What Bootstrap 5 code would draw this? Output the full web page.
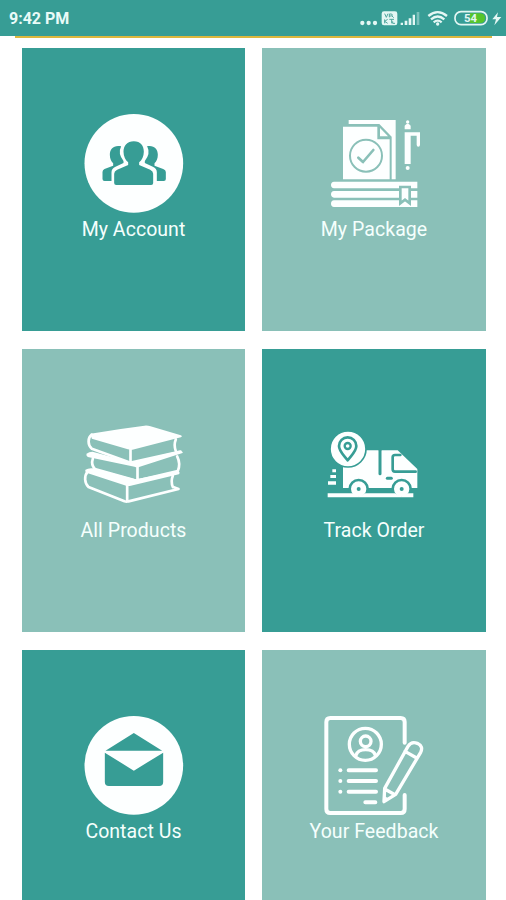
<!DOCTYPE html>
<html lang="en">
<head>
<meta charset="utf-8">
<meta name="viewport" content="width=device-width, initial-scale=1">
<title>Store menu</title>
<link href="https://cdn.jsdelivr.net/npm/bootstrap@5.3.0/dist/css/bootstrap.min.css" rel="stylesheet">
<style>
:root{--teal:#379d95;--mint:#8ac0b8;--gold:#dcb83e}
body{font-family:Roboto,"Liberation Sans",sans-serif;background:#fff;height:900px;overflow:hidden}
.statusbar{height:36px;background:var(--teal);color:#e9fbf8;padding-left:9px}
.clock{font-size:16px;font-weight:700;line-height:20px;padding-top:2px}
.goldline{height:2px;background:var(--gold);margin:0 14px 0 15px}
.tiles{display:grid;grid-template-columns:223px 224px;column-gap:17px;row-gap:18px;padding:10px 0 0 22px}
.tile{height:283px;padding-top:57px;color:#f5fffd}
.tile svg{width:130px;height:110px;flex:none;fill:#fdffff;stroke:none}
.teal{background:var(--teal);--bg:var(--teal)}
.mint{background:var(--mint);--bg:var(--mint)}
.tile .ln{fill:none;stroke:#fdffff;stroke-linecap:round;stroke-linejoin:round}
.tile .cut{fill:none;stroke:var(--bg);stroke-linecap:round;stroke-linejoin:round}
.tile .hole{fill:var(--bg)}
.caption{font-size:19.5px;line-height:29px;letter-spacing:.05px;white-space:nowrap}
</style>
</head>
<body>
<header class="statusbar d-flex align-items-center justify-content-between">
  <div class="clock">9:42 PM</div>
  <svg width="166" height="36" viewBox="0 0 498 108" fill="#e4f7f4" aria-hidden="true">
    <circle cx="67" cy="69" r="6.500"/><circle cx="86" cy="69" r="6.500"/><circle cx="105" cy="69" r="6.500"/>
    <rect x="125" y="34" width="47" height="42" rx="7"/>
    <path d="M134 41l5 11 5-11M148 52V42h7q4 3 0 6h-7m8 0 5 5M134 58v12m0-6 9-6m-9 6 9 6M148 58h14m-7 0v12M158 64v6h7" fill="none" stroke="#4ea59d" stroke-width="3"/>
    <path d="M182 75v-7h7v7zM194 75V62h8v13zM206 75V55h8v20zM218 75V44h7v31z"/><path d="M230 75V36h8v39z" opacity=".4"/>
    <g fill="none" stroke="#e4f7f4" stroke-width="7"><path d="M265 48q28-23 56 0M273 58q20-17 40 0M281 67q12-10 24 0"/></g><circle cx="293" cy="72" r="5"/>
    <rect x="345" y="35" width="96" height="39" rx="18" fill="none" stroke="#e4f7f4" stroke-width="5"/>
    <path d="M390 40h30q15 1 15 14.500T420 69h-30z" fill="#55c52b"/>
    <text x="372" y="66" font-family="Roboto,sans-serif" font-size="34" font-weight="700">54</text>
    <path d="M474 37l-17 21h11l-5 18 21-25h-13z"/>
  </svg>
</header>
<div class="goldline"></div>
<main class="tiles">
  <a class="tile teal d-flex flex-column align-items-center text-decoration-none" href="#">
    <svg viewBox="-4.500 15 390 330" aria-hidden="true">
      <circle cx="190" cy="190" r="148"/>
      <g class="hole">
        <path d="M152 139c-22-5-34 8-34 25 0 12 4 20 10 26v7l-26 10q-6 3-6 9v21q0 6 6 6h21v-26q0-12 12-17l24-11v-6q-18-22-7-44z"/>
        <path d="M228 139c22-5 34 8 34 25 0 12-4 20-10 26v7l26 10q8 3 8 9v21q0 6-6 6h-21v-26q0-12-12-17l-24-11v-6q18-22 7-44z"/>
        <path d="M190 124c-20 0-31 13-31 31 0 14 6 25 14 32v8l-33 14q-9 4-9 12v28q0 6 6 6h105q6 0 6-6v-28q0-8-9-12l-33-14v-8c8-7 14-18 14-32 0-18-10-31-30-31z"/>
      </g>
    </svg>
    <span class="caption">My Account</span>
  </a>
  <a class="tile mint d-flex flex-column align-items-center text-decoration-none" href="#">
    <svg viewBox="-3 15 390 330" aria-hidden="true">
      <path d="M116 60h141v178h-12V110l-37-38h-92z"/>
      <path d="M99 80h103v38h37v120H99z"/>
      <path d="M210 84v25h24z"/>
      <circle class="cut" cx="168" cy="167" r="48" stroke-width="6"/>
      <path class="cut" d="M145 173l14 13 31-36" stroke-width="8"/>
      <path d="M72 245h250v20H72q-9-1-9-10t9-10zM72 273h250v20H72q-9-1-9-10t9-10zM72 301h250v20H72q-9-1-9-10t9-10z"/>
      <path d="M271 261h28v49l-14-11-14 11z" stroke="var(--bg)" stroke-width="8"/>
      <circle cx="293" cy="66" r="5"/><path d="M284 77q9-12 18 0v11h-18zM284 97h46v37q0 6-5 6t-5-6v-27h-18v85h-18z"/><circle cx="293" cy="204" r="6"/>
    </svg>
    <span class="caption">My Package</span>
  </a>
  <a class="tile mint d-flex flex-column align-items-center text-decoration-none" href="#">
    <svg viewBox="-4.500 -12 390 330" aria-hidden="true">
      <path d="M60 71q82-14 162-24 9-1 18 2l91 27q6 3 0 6L186 119q-7 1-14-1L64 86z"/>
      <path class="ln" d="M64 74c-13 9-13 31 0 42l110 40q7 2 14 0l142-31M180 116v39M316 88q-7 18 0 36" stroke-width="8"/>
      <path d="M48 131q8-6 18-6l112 30q7 2 14 0l134-33q14 2 10 7l-128 41q-8 3-16 0L52 141q-6-4-4-10z"/>
      <path class="ln" d="M67 146q-6 18 6 31l118 33q8 2 16 0l115-27q9-22-2-44M201 167v42" stroke-width="8"/>
      <path d="M45 179q9-6 23-4l120 31q8 2 16 0l115-22q13 2 6 9l-144 34q-7 2-14 0L50 189q-8-4-5-10z"/>
      <path class="ln" d="M52 184c-12 14-10 36 2 47l108 43q6 2 12 0l150-37-16-6M170 223v50M307 197q-7 17 0 34" stroke-width="8"/>
    </svg>
    <span class="caption">All Products</span>
  </a>
  <a class="tile teal d-flex flex-column align-items-center text-decoration-none" href="#">
    <svg viewBox="-3 -12 390 330" aria-hidden="true">
      <path d="M99 121h164l59 56v57H99z"/>
      <circle cx="114" cy="117" r="54" stroke="var(--bg)" stroke-width="5"/>
      <path class="cut" d="M113 151c-11-15-26-27-26-43a26 26 0 0 1 52 0c0 16-15 28-26 43z" stroke-width="8"/>
      <circle class="cut" cx="113" cy="108" r="9" stroke-width="7"/>
      <path class="cut" d="M210 121v70" stroke-width="9"/>
      <path class="cut" d="M317 185h-62q-7 0-7-7v-36q0-7 7-7h16" stroke-width="8"/>
      <path class="cut" d="M232 205h12" stroke-width="9"/>
      <circle cx="146" cy="237" r="27" stroke="var(--bg)" stroke-width="8"/><circle cx="275" cy="237" r="27" stroke="var(--bg)" stroke-width="8"/>
      <circle class="hole" cx="146" cy="237" r="6"/><circle class="hole" cx="275" cy="237" r="6"/>
      <path d="M53 250h75q18 17 38 0h89q20 17 38 0h17v12H53z"/>
      <path d="M67 178h11v9H67zM61 195h17v9H61zM54 214h24v10H54z"/>
    </svg>
    <span class="caption">Track Order</span>
  </a>
  <a class="tile teal d-flex flex-column align-items-center text-decoration-none" href="#">
    <svg viewBox="-4.500 21 390 330" aria-hidden="true">
      <circle cx="190" cy="196" r="148"/>
      <path class="hole" d="M190 99l85 53H105zM103 158l87 54 88-54v88q0 12-12 12H115q-12 0-12-12z"/>
    </svg>
    <span class="caption">Contact Us</span>
  </a>
  <a class="tile mint d-flex flex-column align-items-center text-decoration-none" href="#">
    <svg viewBox="27 21 390 330" aria-hidden="true">
      <g class="ln" stroke-width="12">
        <path d="M314 128V66q0-12-12-12H91q-12 0-12 12v261q0 12 12 12h211q12 0 12-12v-42"/>
        <circle cx="196" cy="133" r="48" stroke-width="10"/>
        <circle cx="197" cy="124" r="16" stroke-width="10"/>
        <path d="M168 166q5-17 29-17t29 17" stroke-width="10"/>
        <path d="M146 211h82M146 243h82M146 275h82M196 307h30"/>
        <path d="M252 305l2-40 70-126q10-16 28-9 19 9 10 27l-75 126zM254 267l31 17M315 154l35 20" stroke-width="10"/>
      </g>
      <circle cx="121" cy="211" r="6"/><circle cx="121" cy="243" r="6"/><circle cx="121" cy="275" r="6"/>
      <path d="M250 309l2-22 16 10z"/>
    </svg>
    <span class="caption">Your Feedback</span>
  </a>
</main>
<script src="https://cdn.jsdelivr.net/npm/bootstrap@5.3.0/dist/js/bootstrap.bundle.min.js"></script>
</body>
</html>
